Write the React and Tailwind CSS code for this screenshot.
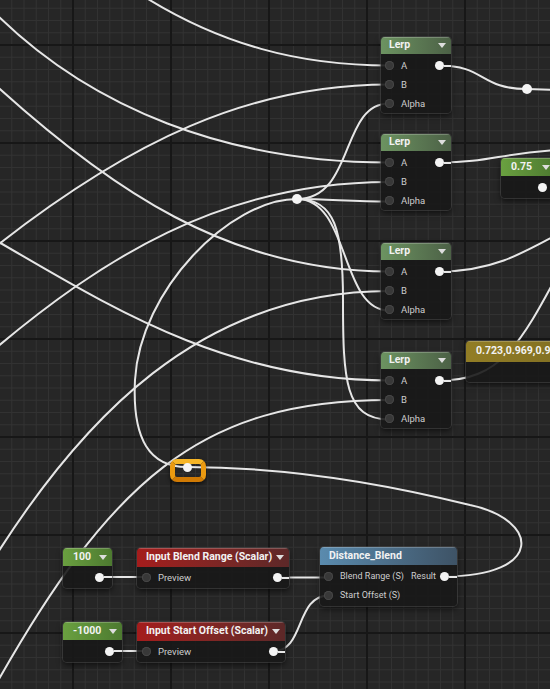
import React from 'react'

const MINOR = [1, 2, 3, 4, 5, 6, 7].map(i => i * 12.25)

const WIRES = [
  'M140 -6 C220 45 300 65.5 389 65.5',
  'M-10 8 C90 110 230 162.5 389 162.5',
  'M-10 251 C130 140 250 84.5 389 84.5',
  'M-10 80 C110 190 230 271.5 389 271.5',
  'M-10 237 C100 300 220 380.5 389 380.5',
  'M-10 353 C100 260 220 182 389 182',
  'M-10 565 C80 420 200 291 389 291',
  'M-10 695 C110 480 200 400 389 400',
  // reroute fan-out
  'M297 199 C230 199 140 290 135 380 C132 440 150 467 187 467',
  'M297 199 C355 199 340 103.5 389 103.5',
  'M297 199 C330 199 350 201.5 389 201.5',
  'M297 199 C350 199 340 310.5 389 310.5',
  'M297 199 C335 199 343 230 343 300 C343 380 345 419.5 389 419.5',
  // lerp outputs
  'M439.5 65.5 C485 65.5 480 89 527 89 L560 90',
  'M439.5 162.5 C490 162.5 500 153 560 150',
  'M439.5 271.5 C490 271.5 520 255 560 233',
  'M439.5 380.5 C500 380.5 520 345 560 270',
  // bottom params
  'M99 577 H147',
  'M277 577.5 H329',
  'M108 651 H147',
  'M273 651.5 C305 651.5 295 595.5 329 595.5',
  'M444 576.5 C545 576.5 540 520 470 505 C390 485 290 467 187 467',
]

function Canvas() {
  return (
    <svg className="absolute inset-0" width="550" height="689" viewBox="0 0 550 689">
      <defs>
        <pattern id="grid" width="98" height="98" x="73" y="45" patternUnits="userSpaceOnUse">
          <rect width="98" height="98" fill="#262626" />
          {MINOR.map(p => (
            <g key={p} stroke="#323232" strokeWidth="1">
              <line x1={p} y1="0" x2={p} y2="98" />
              <line x1="0" y1={p} x2="98" y2={p} />
            </g>
          ))}
          <path d="M0 0V98M98 0V98M0 0H98M0 98H98" stroke="#171717" strokeWidth="2" />
        </pattern>
      </defs>
      <rect width="550" height="689" fill="url(#grid)" />
      <g fill="none" stroke="#e6e6e6" strokeWidth="2" strokeLinecap="round">
        {WIRES.map(d => <path key={d} d={d} />)}
      </g>
      <circle cx="297" cy="199" r="5" fill="#f4f4f4" />
      <circle cx="527" cy="89" r="5" fill="#f4f4f4" />
    </svg>
  )
}

const Tri = () => (
  <svg width="8" height="5" viewBox="0 0 8 5" className="shrink-0">
    <path d="M0 0h8L4 5z" fill="#dedede" />
  </svg>
)

const InPin = () => (
  <span className="h-[9px] w-[9px] shrink-0 rounded-full bg-[#383838] shadow-[inset_0_0_0_1px_#474747]" />
)

function OutPin({ stub }) {
  return (
    <span className="flex shrink-0 items-center">
      <span className="h-[9px] w-[9px] rounded-full bg-[#f4f4f4]" />
      {stub && <span className={`h-[2px] bg-[#e6e6e6] ${stub}`} />}
    </span>
  )
}

const Label = ({ children }) => (
  <span className="whitespace-nowrap text-[9.5px] leading-none text-[#cdcdcd]">{children}</span>
)

function Node({ pos, head, title, arrow = true, children }) {
  return (
    <div
      className={`absolute overflow-hidden rounded-[4px] bg-[#181818]/90 shadow-[0_0_0_1px_rgba(80,80,80,0.5),0_3px_6px_rgba(0,0,0,0.6)] ${pos}`}
    >
      <div className={`flex items-center justify-between shadow-[inset_0_1px_0_rgba(255,255,255,0.22)] ${head}`}>
        <span className="whitespace-nowrap text-[10.5px] font-bold leading-none text-[#f2f2f2]">{title}</span>
        {arrow && <Tri />}
      </div>
      {children}
    </div>
  )
}

const LERP_HEAD = 'h-[17px] pl-[8px] pr-[5px] bg-linear-to-r from-[#6c9361] to-[#4c6146]'
const CONST_HEAD = 'h-[18px] pl-[10px] pr-[5px] bg-linear-to-r from-[#6aa040] to-[#4d7a30]'
const PARAM_HEAD = 'h-[19px] pl-[9px] pr-[5px] bg-linear-to-r from-[#a41c1c] to-[#5d2828]'

function Lerp({ pos }) {
  return (
    <Node pos={`w-[70px] ${pos}`} head={LERP_HEAD} title="Lerp">
      <div className="pt-[2px]">
        <div className="flex h-[19px] items-center justify-between pl-[4px]">
          <div className="flex items-center gap-[7px]">
            <InPin />
            <Label>A</Label>
          </div>
          <OutPin stub="w-[7px]" />
        </div>
        {['B', 'Alpha'].map(l => (
          <div key={l} className="flex h-[19px] items-center gap-[7px] pl-[4px]">
            <InPin />
            <Label>{l}</Label>
          </div>
        ))}
      </div>
    </Node>
  )
}

function Constant({ pos, value, stub = 'w-[8px]' }) {
  return (
    <Node pos={pos} head={CONST_HEAD} title={value}>
      <div className={`flex h-[22px] items-center justify-end ${stub ? '' : 'pr-[8px]'}`}>
        <OutPin stub={stub} />
      </div>
    </Node>
  )
}

function Param({ pos, title }) {
  return (
    <Node pos={pos} head={PARAM_HEAD} title={title}>
      <div className="flex h-[21px] items-center justify-between pl-[5px]">
        <div className="flex items-center gap-[7px]">
          <InPin />
          <Label>Preview</Label>
        </div>
        <OutPin stub="w-[7px]" />
      </div>
    </Node>
  )
}

export default function App() {
  return (
    <div className="relative h-[689px] w-[550px] overflow-hidden bg-[#262626] font-['Roboto',sans-serif]">
      <Canvas />

      <Lerp pos="left-[381px] top-[37px]" />
      <Lerp pos="left-[381px] top-[134px]" />
      <Lerp pos="left-[381px] top-[243px]" />
      <Lerp pos="left-[381px] top-[352px]" />

      <Constant pos="left-[501px] top-[158px] w-[54px]" value="0.75" stub={null} />

      {/* vector constant, runs off the right edge */}
      <Node
        pos="left-[466px] top-[341px] w-[130px]"
        head="h-[21px] pl-[10px] pr-[5px] bg-linear-to-r from-[#927d25] to-[#7d6c22]"
        title="0.723,0.969,0.995,1.0"
        arrow={false}
      >
        <div className="h-[20px]" />
      </Node>

      {/* reroute knot */}
      <div className="absolute left-[170px] top-[459px] h-[23px] w-[36px] rounded-[7px] border-[5px] border-[#eb9a10] border-t-[#f6b526] border-b-[#d07a04] shadow-[0_2px_4px_rgba(0,0,0,0.6)]" />
      <div className="absolute left-[182.5px] top-[462.5px] h-[9px] w-[9px] rounded-full bg-[#f4f4f4]" />

      <Constant pos="left-[63px] top-[548px] w-[49px]" value="100" />
      <Param pos="left-[137px] top-[548px] w-[152px]" title="Input Blend Range (Scalar)" />

      <Node
        pos="left-[320px] top-[547px] w-[137px]"
        head="h-[18px] pl-[9px] pr-[5px] bg-linear-to-r from-[#5a8bae] to-[#3e5366]"
        title="Distance_Blend"
        arrow={false}
      >
        <div className="pt-[2px] pb-[1px] text-[9px]">
          <div className="flex h-[19px] items-center pl-[4px]">
            <div className="flex flex-1 items-center gap-[7px]">
              <InPin />
              <span className="whitespace-nowrap leading-none text-[#cdcdcd]">Blend Range (S)</span>
            </div>
            <div className="flex items-center gap-[4px]">
              <span className="whitespace-nowrap leading-none text-[#cdcdcd]">Result</span>
              <OutPin stub="w-[8px]" />
            </div>
          </div>
          <div className="flex h-[19px] items-center gap-[7px] pl-[4px]">
            <InPin />
            <span className="whitespace-nowrap leading-none text-[#cdcdcd]">Start Offset (S)</span>
          </div>
        </div>
      </Node>

      <Constant pos="left-[63px] top-[622px] w-[59px]" value="-1000" />
      <Param pos="left-[137px] top-[622px] w-[148px]" title="Input Start Offset (Scalar)" />
    </div>
  )
}
